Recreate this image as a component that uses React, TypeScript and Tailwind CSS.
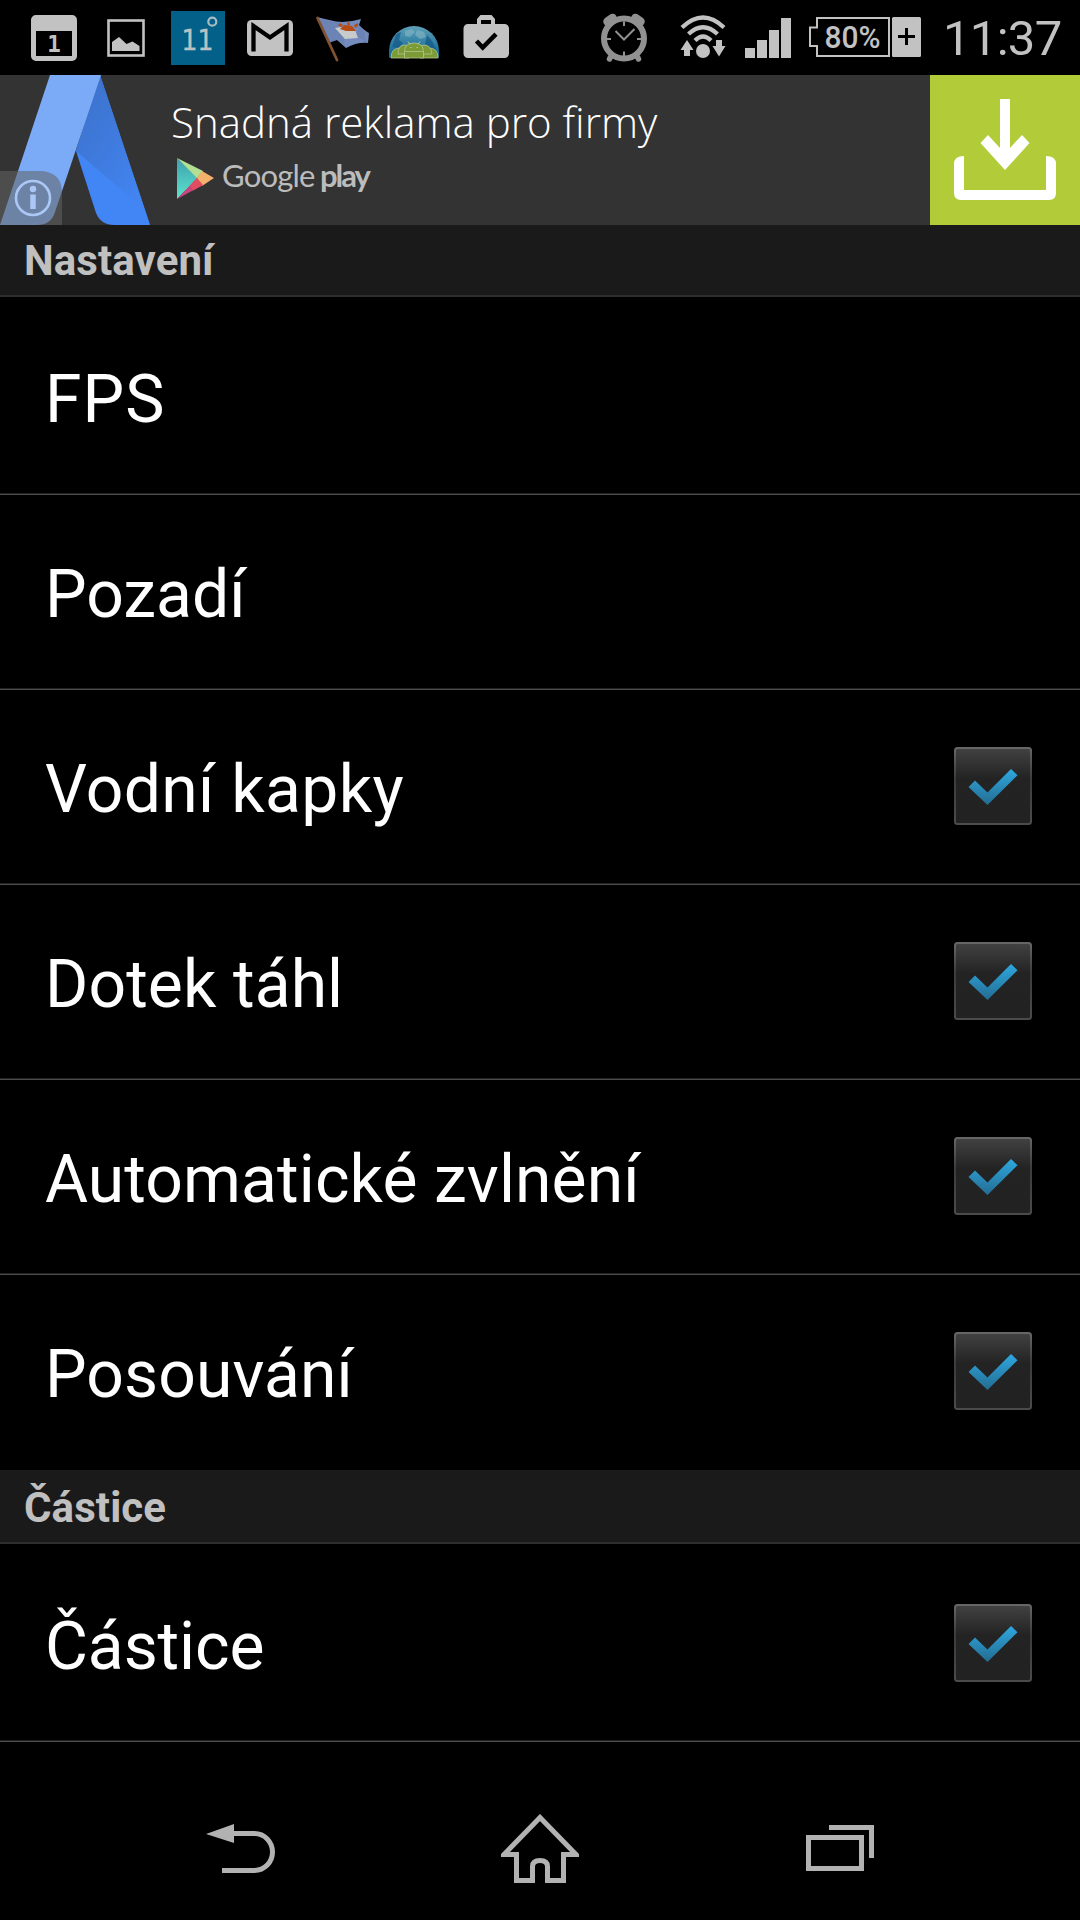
import React from "react";

const GREY = "#c2c2c2";

function CalendarIcon() {
  return (
    <svg className="ml-[31px]" width="46" height="46" viewBox="31 15 46 46">
      <path fill={GREY} fillRule="evenodd" d="M36 15h36a5 5 0 0 1 5 5v36a5 5 0 0 1-5 5H36a5 5 0 0 1-5-5V20a5 5 0 0 1 5-5zM36 31v25h36V31z" />
      <text x="54" y="52.3" textAnchor="middle" fontFamily="DejaVu Sans Mono" fontWeight="700" fontSize="22.5" fill={GREY}>1</text>
    </svg>
  );
}

function PictureIcon() {
  return (
    <svg className="ml-[30px]" width="38" height="38" viewBox="107 19 38 38">
      <rect x="108.5" y="20.5" width="35" height="35" fill="none" stroke={GREY} strokeWidth="2.6" />
      <path fill={GREY} d="M112 51V42l7-5 7.500 7 6-2.500 7 4.500v5z" />
    </svg>
  );
}

function WeatherIcon() {
  return (
    <svg className="ml-[26px]" width="54" height="54" viewBox="171 11 54 54">
      <rect x="171" y="11" width="54" height="54" fill="#036088" />
      <text x="181" y="50" fontFamily="DejaVu Sans Mono" fontSize="29" textLength="32" lengthAdjust="spacingAndGlyphs" fill="#b9c1c4" stroke="#b9c1c4" strokeWidth=".3">11</text>
      <circle cx="212.300" cy="21.700" r="4" fill="none" stroke="#a9bcc4" strokeWidth="2.200" />
    </svg>
  );
}

function MailIcon() {
  return (
    <svg className="ml-[22px]" width="46" height="36" viewBox="247 20 46 36">
      <rect x="247" y="20" width="46" height="36" rx="4.500" fill={GREY} />
      <path d="M253.500 51.500V26L270 37.500 286.500 26v25.500" fill="none" stroke="#000" strokeWidth="4.300" />
    </svg>
  );
}

function FlagIcon() {
  return (
    <svg className="ml-[22px]" width="56" height="46" viewBox="315 16 56 46">
      <path fill="#738cbd" d="M317 17q9 2.500 19 4.500 12 1.500 25-2.500l-2 6q6 6 10 8l-1 10q-11-1-22 5l-9-8-9 3z" />
      <path fill="#5b73a5" d="m320 19 20 4 5 23-8-6-8 3zM359 25l-3 11 12 7q-4-5-3-10z" opacity=".35" />
      <path fill="#c8cbcc" d="m335 28 6-1 14 3 3 8-13 1z" />
      <path fill="#b84a14" d="m340 29 4-4 8 1 4 5q-7 0-10 0zM338 25l2-2 3 2-2 2zM347 23l2-1 1 3-2 1zM354 25l4-2v3l-3 2z" />
      <path d="m317.500 18 19.500 42" fill="none" stroke="#805232" strokeWidth="2.800" strokeLinecap="round" />
    </svg>
  );
}

function AndroidGlobeIcon() {
  return (
    <svg className="ml-[18px]" width="51" height="34" viewBox="389 25 51 34">
      <defs>
        <linearGradient id="globe" x1="0" y1="0" x2="0" y2="1">
          <stop offset="0" stopColor="#5fa0b8" />
          <stop offset="1" stopColor="#086394" />
        </linearGradient>
      </defs>
      <path fill="url(#globe)" d="M389 57.700V51a25 25 0 0 1 50 0v6.700z" />
      <path fill="#155788" d="M396 34l5-2-2 8 4 3-5 5-6-1zM427 35l5 6 4 8-6 1-5-6z" opacity=".7" />
      <path fill="#8dbac4" d="M405 31l7-2 3 3-5 5-5-1zM417 30l7 2 2 5-6 2-5-4z" opacity=".55" />
      <g fill="#7b9c35" stroke="#b4c38d" strokeWidth=".8">
        <path d="M391 58q0-10 9-10t9 10zM420 58q0-10 9-10t9 10z" />
        <path d="M398 54q0-9 7-9t8 9zM417 54q0-9 7-9t8 9z" />
        <path d="M404.500 58v-6q0-9 9.500-9t9.500 9v6zM404.500 51.500h19" />
      </g>
      <path d="m408 41.500 2 3m10-3-2 3" stroke="#b4c38d" />
      <path d="M410.500 47.500h.9m5.300 0h.9" stroke="#d5ddc6" strokeWidth="1.200" />
    </svg>
  );
}

function BagCheckIcon() {
  return (
    <svg className="ml-[23px]" width="46" height="43" viewBox="463 15 46 43">
      <path fill={GREY} fillRule="evenodd" d="M468 24h9v-5l3.500-4h11l3.500 4v5h9.500a4.500 4.500 0 0 1 4.500 4.500v25a4.500 4.500 0 0 1-4.500 4.500H468a4.500 4.500 0 0 1-4.500-4.500v-25A4.500 4.500 0 0 1 468 24zM481 20v4h10v-4z" />
      <path d="m476.500 41 6.200 6.500L496 34.200" fill="none" stroke="#000" strokeWidth="4.500" />
    </svg>
  );
}

function AlarmIcon() {
  return (
    <svg className="ml-[91px]" width="48" height="49" viewBox="600 13 48 49">
      <g fill="none" stroke="#919191">
        <path d="m607.500 21.500 5-3.500M640.500 21.500 635.500 18" strokeWidth="8.500" strokeLinecap="round" />
        <path d="m610.500 57-1 2M637.500 57l1 2" strokeWidth="5.500" strokeLinecap="round" />
        <circle cx="624" cy="38.500" r="20" strokeWidth="6" fill="#000" />
        <path d="M624 21.500v4.500M624 51.500V56M606.500 39h4.500M637 39h4.500" strokeWidth="2" />
        <path d="m615.500 31 8.500 8.500 10.500-10.500" strokeWidth="2" />
      </g>
    </svg>
  );
}

function WifiIcon() {
  return (
    <svg className="ml-[32px]" width="46" height="43" viewBox="680 15 46 43">
      <g fill="none" stroke={GREY} strokeWidth="4.300">
        <path d="M682 27.500q21-20 42 0" />
        <path d="M688.500 34q14.500-13.500 29 0" />
        <path d="M695 40.500q8-8 16 0" />
      </g>
      <circle cx="703" cy="51" r="7" fill={GREY} />
      <path fill={GREY} d="m687 40 6.500 10H690v6h-6v-6h-3.500zM716 40h6v6h3.500L719 56.500 712.500 46h3.500z" />
    </svg>
  );
}

function SignalIcon() {
  return (
    <svg className="ml-[19px]" width="46" height="40" viewBox="745 18 46 40">
      <path fill={GREY} d="M745 48h10v10h-10zM757 40h10v18h-10zM769 30h10v28h-10zM781 18h10v40h-10z" />
    </svg>
  );
}

function BatteryIcon() {
  return (
    <svg className="ml-[18px]" width="112" height="40" viewBox="809 17 112 40">
      <path d="M889 18H817v9.500h-7V46h7v10h72z" fill="none" stroke={GREY} strokeWidth="2" />
      <rect x="892" y="17" width="29" height="40" rx="1.500" fill={GREY} />
      <path d="M898 36.500h17M906.500 28v17" stroke="#000" strokeWidth="3" />
      <text x="824.500" y="48" fontFamily="Roboto" fontWeight="500" fontSize="31" textLength="56" lengthAdjust="spacingAndGlyphs" fill={GREY}>80%</text>
    </svg>
  );
}

function StatusBar() {
  return (
    <header className="flex h-[75px] items-start bg-black">
      <div className="flex pt-[15px]"><CalendarIcon /></div>
      <div className="flex pt-[19px]"><PictureIcon /></div>
      <div className="flex pt-[11px]"><WeatherIcon /></div>
      <div className="flex pt-[20px]"><MailIcon /></div>
      <div className="flex pt-[16px]"><FlagIcon /></div>
      <div className="flex pt-[25px]"><AndroidGlobeIcon /></div>
      <div className="flex pt-[15px]"><BagCheckIcon /></div>
      <div className="flex pt-[13px]"><AlarmIcon /></div>
      <div className="flex pt-[15px]"><WifiIcon /></div>
      <div className="flex pt-[18px]"><SignalIcon /></div>
      <div className="flex pt-[17px]"><BatteryIcon /></div>
      <time className="ml-[22px] pt-[10px] text-[49px] leading-[58px] font-normal tracking-[-0.7px] text-[#c2c2c2]">11:37</time>
    </header>
  );
}

function AdsLogo() {
  return (
    <svg width="150" height="150" viewBox="0 0 150 150" className="block shrink-0">
      <defs>
        <linearGradient id="leg" x1="0" y1="0" x2=".7" y2="1">
          <stop offset="0" stopColor="#3c70c6" />
          <stop offset="1" stopColor="#4285f4" />
        </linearGradient>
      </defs>
      <path fill="#4285f4" d="M76 76 96 138q5 12 18 12h36L100 0z" />
      <path fill="url(#leg)" d="M100 0 76 76l65 55.500 9 18.500z" />
      <path fill="#7baaf7" d="M50 0h51L55 137q-4 13-18 13H0z" />
      <path fill="#626262" fillOpacity=".55" d="M0 96h42q20 2 20 22v32H0z" />
      <circle cx="33" cy="123" r="17" fill="none" stroke="#abc7f5" strokeWidth="2.600" />
      <path d="M33 119.500V134" stroke="#abc7f5" strokeWidth="5.500" />
      <circle cx="33" cy="114" r="3.200" fill="#abc7f5" />
    </svg>
  );
}

function PlayIcon() {
  return (
    <svg width="38" height="42" viewBox="176 156 38 42" className="block">
      <defs>
        <linearGradient id="play" x1="0" y1="0" x2="0" y2="1">
          <stop offset="0" stopColor="#3e9fae" />
          <stop offset="1" stopColor="#5ce5cc" />
        </linearGradient>
      </defs>
      <path fill="url(#play)" d="M177 157v41l21-21z" />
      <path fill="#b3df93" d="m177 157 26 13-6 7z" />
      <path fill="#c8467e" d="m177 198 20-21 6 7z" />
      <path fill="#f4b16c" d="m202 170 12 7-12 8-5-8z" />
      <path fill="#e14d61" d="m190 184.500 7-7.500 6 7-10 5.500z" />
    </svg>
  );
}

function AdBanner() {
  return (
    <section className="flex h-[150px] bg-[#333333]">
      <AdsLogo />
      <div className="flex flex-1 flex-col pl-[21px]">
        <p className="h-[75px] pt-[18px] font-['Open_Sans'] text-[42px] leading-[57px] font-light whitespace-nowrap text-white">
          Snadná reklama pro firmy
        </p>
        <div className="flex pt-[7px] pl-[5px]">
          <PlayIcon />
          <div className="flex items-start pl-[8px] font-[Lato] text-[31px] leading-[36px] text-[#bcbcbc]">
            <span className="w-[98px] tracking-[-0.8px]">Google</span>
            <span className="font-bold tracking-[-2px]">play</span>
          </div>
        </div>
      </div>
      <div className="flex w-[150px] items-center justify-center bg-[#b2cb39]">
        <svg width="102" height="102" viewBox="0 0 102 102">
          <path fill="#fff" d="M46 0h10v49l12-13 7.500 8L51 71 26.500 44 34 36l12 13z" />
          <path fill="#fff" d="M10 57v34h82V57q10 0 10 8v29q0 7-7 7H7q-7 0-7-7V65q0-8 10-8z" />
        </svg>
      </div>
    </section>
  );
}

function SectionHeader({ title, tall }: { title: string; tall?: boolean }) {
  return (
    <h2 className={`flex items-start border-b-2 border-[#2e2e2e] bg-[#1a1a1a] pl-[24px] text-[42px] leading-[49px] font-bold tracking-[0.1px] text-[#c0c0c0] ${tall ? "h-[74px] pt-[13px]" : "h-[72px] pt-[11px]"}`}>
      {title}
    </h2>
  );
}

function CheckBox() {
  return (
    <svg width="78" height="78" viewBox="0 0 78 78" className="block">
      <defs>
        <linearGradient id="box" x1="0" y1="0" x2="0" y2="1">
          <stop offset="0" stopColor="#424242" />
          <stop offset=".4" stopColor="#232323" />
          <stop offset="1" stopColor="#222222" />
        </linearGradient>
        <linearGradient id="rim" x1="0" y1="0" x2="0" y2="1">
          <stop offset="0" stopColor="#666666" />
          <stop offset=".4" stopColor="#3c3c3c" />
          <stop offset="1" stopColor="#4b4b4b" />
        </linearGradient>
        <linearGradient id="tick" x1="0" y1="0" x2="0" y2="1">
          <stop offset="0" stopColor="#2ea8e0" />
          <stop offset="1" stopColor="#246c91" />
        </linearGradient>
      </defs>
      <rect x="1" y="1" width="76" height="76" rx="2.500" fill="url(#box)" stroke="url(#rim)" strokeWidth="2" />
      <path fill="url(#tick)" d="m14.500 40 6.500-6.500 12.500 12L57 22l6.500 6.200L33.500 58z" />
    </svg>
  );
}

type RowProps = { label: string; tracking?: string; checked?: boolean; first?: boolean; last?: boolean };

function Row({ label, tracking = "tracking-normal", checked, first, last }: RowProps) {
  return (
    <li className={`flex flex-col ${first ? "h-[198px]" : "h-[195px]"}`}>
      <div className="flex flex-1 items-start justify-between pr-[48px] pl-[45px]">
        <span className={`text-[66px] leading-[78px] whitespace-nowrap text-white ${tracking} ${first ? "pt-[64px]" : "pt-[61px]"}`}>{label}</span>
        {checked && <div className={first ? "pt-[60px]" : "pt-[57px]"}><CheckBox /></div>}
      </div>
      {!last && <div className="h-[2px] border-b border-[#4c4c4c] bg-[#222222]" />}
    </li>
  );
}

function NavBar() {
  return (
    <nav className="flex h-[144px] items-start bg-black">
      <svg className="mt-[47px] ml-[206px]" width="70" height="50" viewBox="206 1823 70 50">
        <path fill="#b2b2b2" d="m206 1834 28-10v19z" />
        <path fill="none" stroke="#b2b2b2" strokeWidth="5" d="M233 1833.500h21.500a18 18.500 0 0 1 0 37h-32.500" />
      </svg>
      <svg className="mt-[38px] ml-[225px]" width="78" height="70" viewBox="501 1814 78 70">
        <path fill="none" stroke="#b2b2b2" strokeWidth="5" d="M540 1817.500 504 1854.500h12.500v26H532.500v-14q0-6 7.500-6t7.500 6v14h16v-26H576z" />
      </svg>
      <svg className="mt-[49px] ml-[227px]" width="69" height="47" viewBox="806 1825 69 47">
        <rect x="808.500" y="1837.500" width="53" height="31" fill="none" stroke="#b2b2b2" strokeWidth="5" />
        <path d="M829 1827.500h42.500v30.500" fill="none" stroke="#b2b2b2" strokeWidth="5" />
      </svg>
    </nav>
  );
}

export default function App() {
  return (
    <div className="flex h-[1920px] w-[1080px] flex-col overflow-hidden bg-black font-[Roboto,sans-serif]">
      <StatusBar />
      <AdBanner />
      <main className="h-[1551px] overflow-hidden">
        <SectionHeader title="Nastavení" />
        <ul>
          <Row label="FPS" tracking="tracking-[1.1px]" first />
          <Row label="Pozadí" />
          <Row label="Vodní kapky" tracking="tracking-[0.3px]" checked />
          <Row label="Dotek táhl" tracking="tracking-[0.1px]" checked />
          <Row label="Automatické zvlnění" tracking="tracking-[0.1px]" checked />
          <Row label="Posouvání" tracking="tracking-[0.1px]" checked last />
        </ul>
        <SectionHeader title="Částice" tall />
        <ul>
          <Row label="Částice" tracking="tracking-[-0.1px]" checked first />
        </ul>
      </main>
      <NavBar />
    </div>
  );
}
